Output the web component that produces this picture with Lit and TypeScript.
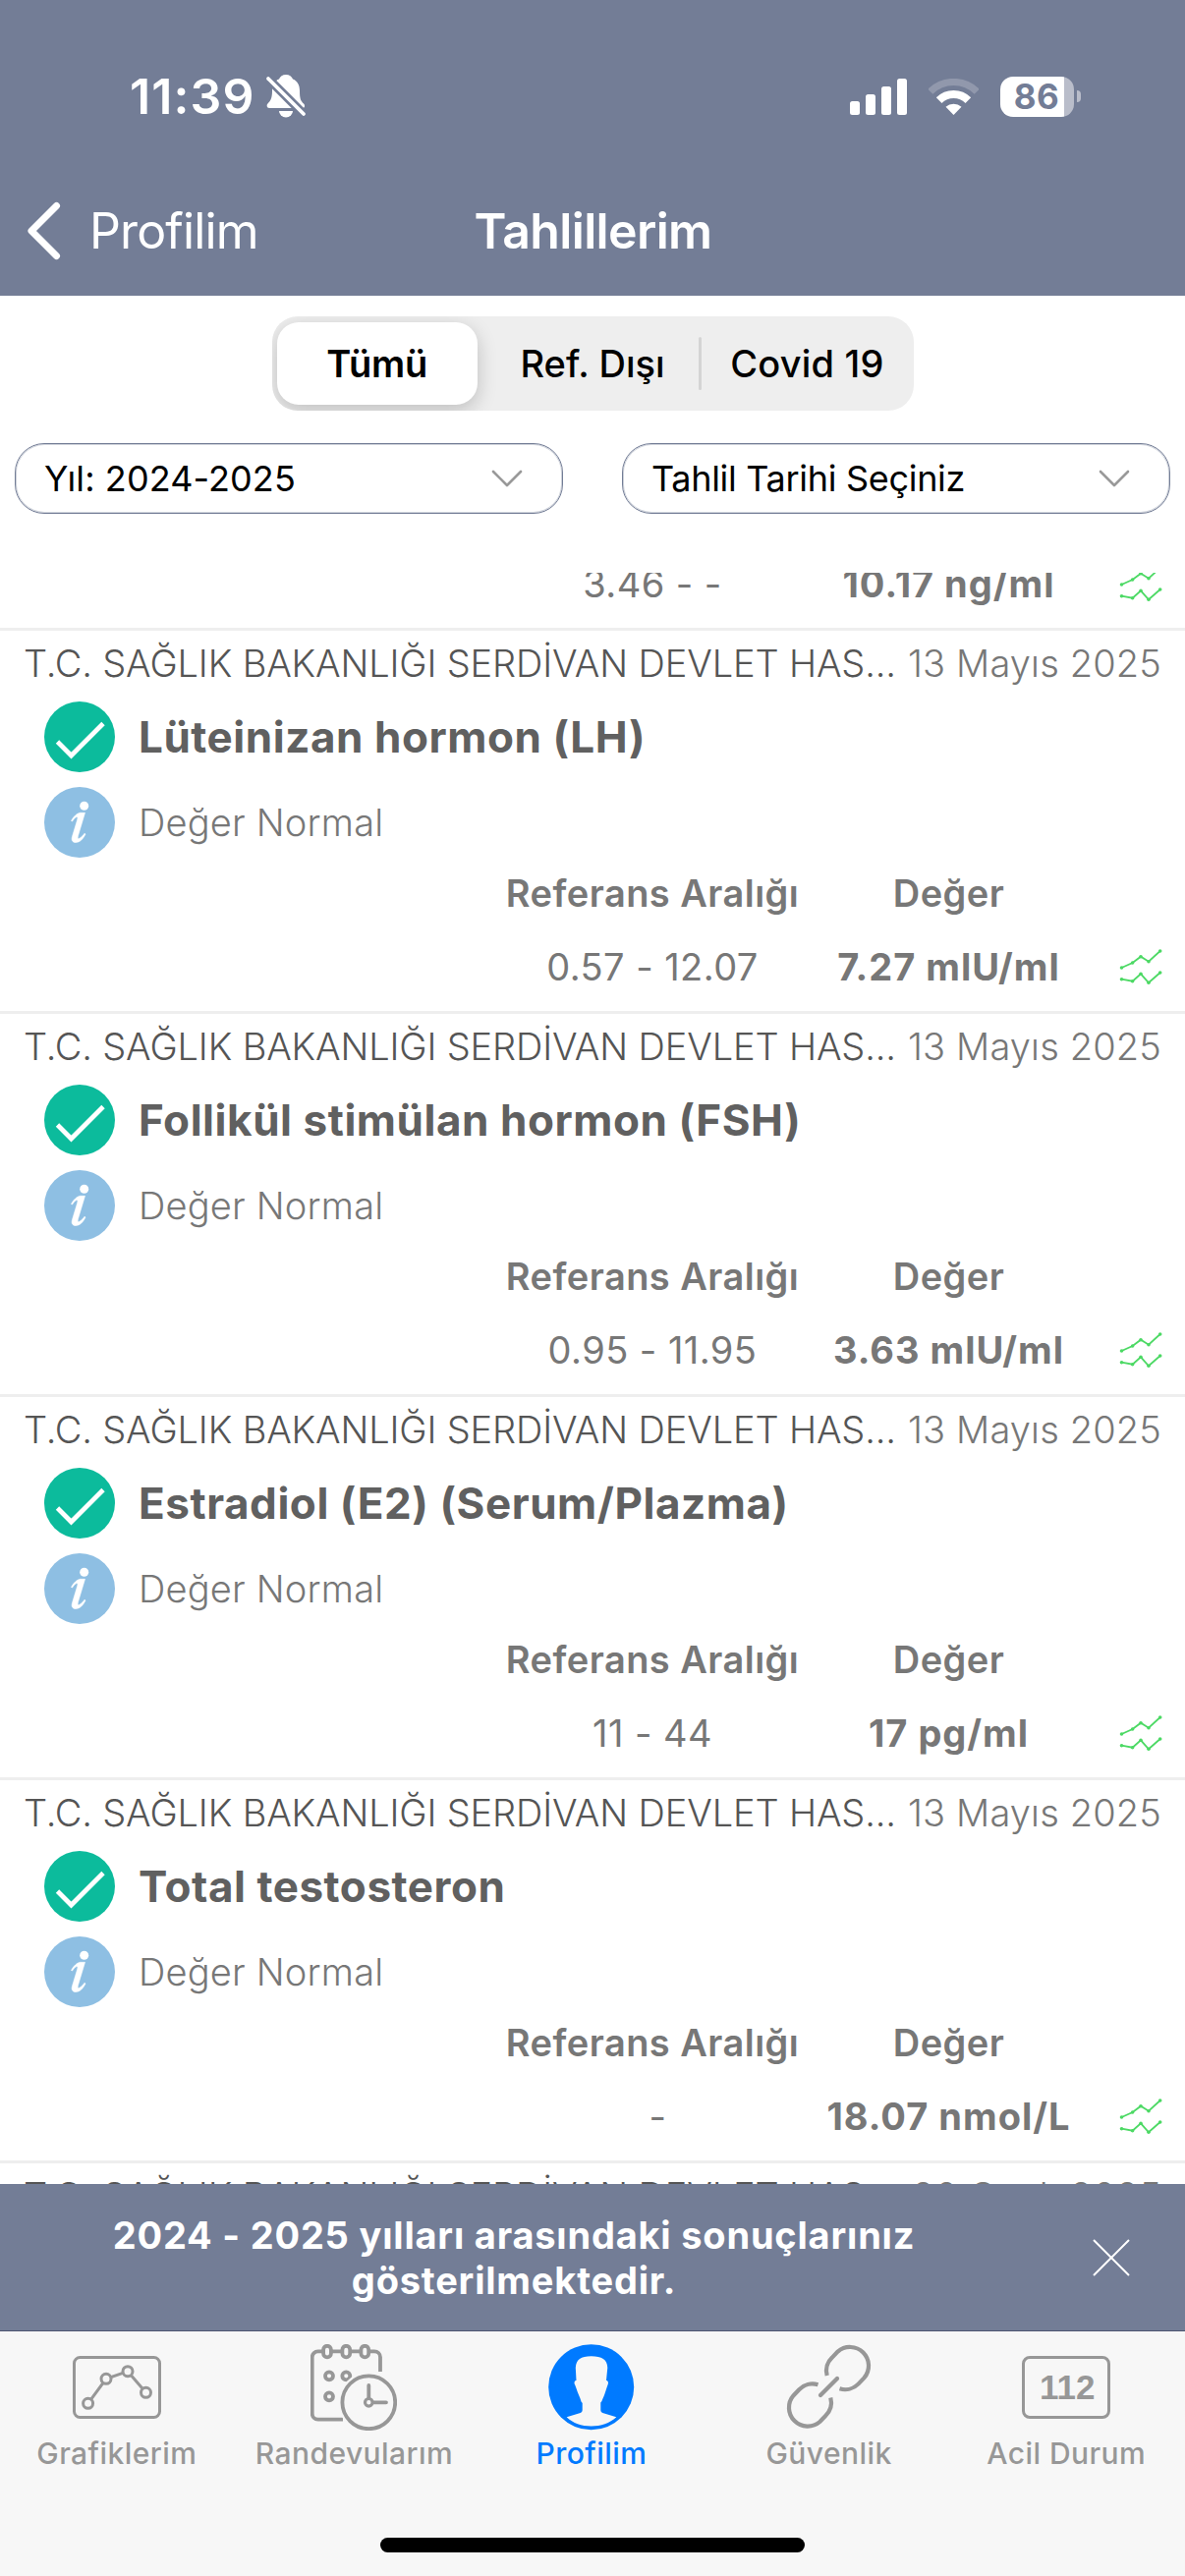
import { LitElement, html, css, svg } from "lit";
import { customElement } from "lit/decorators.js";

interface Result {
  name: string;
  range: string;
  value: string;
}

const HOSPITAL = "T.C. SAĞLIK BAKANLIĞI SERDİVAN DEVLET HAS...";

const RESULTS: Result[] = [
  { name: "Lüteinizan hormon (LH)", range: "0.57 - 12.07", value: "7.27 mlU/ml" },
  { name: "Follikül stimülan hormon (FSH)", range: "0.95 - 11.95", value: "3.63 mlU/ml" },
  { name: "Estradiol (E2) (Serum/Plazma)", range: "11 - 44", value: "17 pg/ml" },
  { name: "Total testosteron", range: "\u00a0-", value: "18.07 nmol/L" },
];

const TREND_POINTS = [
  [2.5, 21], [13.6, 16], [22, 9.7], [30, 14.7], [41.7, 4],
  [2.5, 32.7], [13.6, 34.7], [22, 27.3], [30, 36.3], [41.7, 26],
];

const trend = html`<svg class="trend" viewBox="0 0 44 40" width="44" height="40">
  <g fill="none" stroke="#4cd964" stroke-width="1.8">
    <path d="M2.5 21 13.6 16 22 9.7 30 14.7 41.7 4" />
    <path d="M2.5 32.7 13.6 34.7 22 27.3 30 36.3 41.7 26" />
  </g>
  <g fill="#4cd964">
    ${TREND_POINTS.map(([x, y]) => svg`<circle cx=${x} cy=${y} r="1.8"/>`)}
  </g>
</svg>`;

const down = html`<svg width="32" height="20" viewBox="0 0 32 20">
  <path d="M2 3 16 17 30 3" fill="none" stroke="#999" stroke-width="2.6" stroke-linecap="round" stroke-linejoin="round" />
</svg>`;

const checkIcon = html`<svg width="72" height="72" viewBox="0 0 72 72">
  <circle cx="36" cy="36" r="36" fill="#0cbb9c" />
  <path d="M13.5 41 27.5 55 60 22.5" fill="none" stroke="#fff" stroke-width="4.8" />
</svg>`;

const infoIcon = html`<svg width="72" height="72" viewBox="0 0 72 72">
  <circle cx="36" cy="36" r="36" fill="#8ebfe3" />
  <circle cx="40.7" cy="19.3" r="4.5" fill="#fff" />
  <path d="M27.5 34.5C30 30 33 27 36.5 26.3H41.5L34.5 49.5C33.7 52.5 34.5 53.2 36 52.2C38 51 39.5 49.5 41 47.3L42 48C39.5 53 36 56.5 32 56.5C28.5 56.5 27.5 54 28.5 50.5L33.8 33C34.5 30.5 33.5 30 32 31C30.5 32 29.5 33.5 28.5 35Z" fill="#fff" stroke="#fff" stroke-width=".6" />
</svg>`;

@customElement("app-root")
export class AppRoot extends LitElement {
  static styles = css`
    :host {
      display: flex;
      flex-direction: column;
      width: 1206px;
      height: 2622px;
      overflow: hidden;
      background: #fff;
      font-family: Inter, "Liberation Sans", sans-serif;
      white-space: nowrap;
    }
    * { box-sizing: border-box; }
    svg { display: block; flex: none; }
    .top { height: 301px; background: #737d96; color: #fff; flex: none; }
    .status { height: 196px; display: flex; align-items: center; justify-content: space-between; padding: 0 106px 0 132px; }
    .clock { display: flex; align-items: center; gap: 9px; }
    .time { font-size: 50px; font-weight: 600; letter-spacing: 1.1px; }
    .signals { display: flex; align-items: center; gap: 22px; }
    .battery { display: flex; align-items: center; gap: 3px; }
    .level { width: 75px; height: 41px; border-radius: 13px; background: linear-gradient(90deg, #fff 65px, #b9bdca 65px); color: #737d96; font-size: 35px; font-weight: 700; line-height: 41px; text-align: center; letter-spacing: .4px; padding-right: 1px; }
    .cap { width: 4px; height: 12px; border-radius: 0 4px 4px 0; background: #b9bdca; }
    .nav { height: 78px; display: grid; grid-template-columns: 1fr auto 1fr; align-items: center; }
    .back { display: flex; align-items: center; gap: 29px; padding-left: 26px; font-size: 50px; letter-spacing: -.85px; }
    .title { font-size: 50px; font-weight: 600; letter-spacing: -.65px; padding-left: 1px; }
    .filters { height: 282px; flex: none; padding: 21px 15px 0; }
    .seg { width: 653px; height: 96px; margin: 0 auto; background: #eee; border-radius: 26px; padding: 6px 5px; display: flex; align-items: center; overflow: hidden; font-size: 38px; font-weight: 500; }
    .tab { width: 204px; height: 84px; flex: none; border-radius: 22px; background: #fff; display: flex; align-items: center; justify-content: center; font-weight: 600; letter-spacing: -.3px; box-shadow: 0 6px 20px rgba(0, 0, 0, .2); }
    .opt { width: 225px; text-align: center; padding-left: 10px; }
    .bar { width: 3px; height: 54px; border-radius: 2px; background: #d4d4d4; }
    .last { width: 211px; padding-left: 5px; letter-spacing: .2px; }
    .selects { display: flex; justify-content: space-between; margin-top: 33px; }
    .select { width: 558px; height: 72px; border: 1px solid #737d96; box-shadow: inset 0 0 0 1px rgba(115, 125, 150, .35); border-radius: 30px; padding: 0 40px 0 29px; display: flex; align-items: center; justify-content: space-between; font-size: 36px; letter-spacing: .1px; }
    .date-select { letter-spacing: -.3px; }
    .list { height: 1640px; flex: none; overflow: hidden; display: flex; flex-direction: column; }
    .partial { height: 56px; flex: none; display: flex; flex-direction: column; justify-content: flex-end; padding-bottom: 8px; color: #777; }
    .item { height: 390px; flex: none; border-top: 3px solid #eee; color: #777; }
    .head { height: 67px; padding: 0 24px 2px 24px; display: flex; align-items: center; justify-content: space-between; font-size: 38px; font-weight: 300; }
    .hospital { color: #555; letter-spacing: -.15px; }
    .date { letter-spacing: .15px; }
    .line { display: flex; align-items: center; gap: 24px; padding-left: 45px; height: 72px; margin-top: 5px; }
    .note { margin-top: 15px; font-size: 38px; font-weight: 300; letter-spacing: .2px; }
    .name { font-size: 44px; font-weight: 700; color: #606060; letter-spacing: .55px; }
    .cols { flex: none; display: grid; grid-template-columns: 326px 277px 91px; padding-left: 501px; height: 74px; align-items: center; text-align: center; font-size: 38px; letter-spacing: .45px; }
    .trend { margin-left: 35px; }
    .labels { font-weight: 600; padding-bottom: 2px; }
    .val { font-weight: 700; letter-spacing: 1px; }
    .banner { height: 150px; flex: none; background: #737d96; border-bottom: 1px solid #4e5672; color: #fff; display: flex; align-items: center; padding: 0 56px 0 0; }
    .msg { width: 1046px; margin-right: 66px; text-align: center; font-size: 38px; line-height: 46px; font-weight: 700; letter-spacing: .8px; }
    .tabs { flex: 1; background: #f7f7f7; display: flex; flex-direction: column; align-items: center; }
    .tabrow { display: flex; width: 1208px; margin-left: -2px; height: 210px; flex: none; }
    .tabitem { flex: 1; display: flex; flex-direction: column; align-items: center; color: #979797; font-size: 30px; font-weight: 500; line-height: 21px; letter-spacing: .45px; }
    .icon { height: 114px; display: flex; align-items: center; }
    .sos { width: 90px; height: 64px; border: 3px solid #979797; border-radius: 8px; font: bold 35px/58px "Liberation Sans", sans-serif; letter-spacing: 0; text-align: center; padding-left: 2px; }
    .on { color: #007aff; }
    .home { width: 432px; height: 15px; border-radius: 8px; background: #000; }
  `;

  private cols(range: string, value: string) {
    return html`<div class="cols"><span>${range}</span><span class="val">${value}</span>${trend}</div>`;
  }

  private head(date: string) {
    return html`<div class="head"><span class="hospital">${HOSPITAL}</span><span class="date">${date}</span></div>`;
  }

  render() {
    return html`
      <header class="top">
        <div class="status">
          <div class="clock">
            <span class="time">11:39</span>
            <svg width="44" height="46" viewBox="0 0 44 46">
              <path d="M22 1c3.5 0 6 1.8 7 4.5 5 2 7 6.5 7 12 0 8 1 10 4 13 1.5 1.5 1.5 4.5-1 4.5H5c-2.5 0-3-3-1.5-4.5 3-3 4.5-6 4.5-13 0-5.5 2-10 7-12 1-2.7 3.5-4.5 7-4.5z" fill="#fff" />
              <path d="M15 38h14a7 6.5 0 0 1-14 0z" fill="#fff" />
              <path d="M0 1 41 42" stroke="#737d96" stroke-width="9" />
              <path d="M4 5 40 41" stroke="#fff" stroke-width="3.8" stroke-linecap="round" />
            </svg>
          </div>
          <div class="signals">
            <svg width="58" height="37" viewBox="0 0 58 37" fill="#fff">
              <rect y="23" width="10" height="14" rx="2.5" /><rect x="16" y="16" width="10" height="21" rx="2.5" />
              <rect x="32" y="8" width="10" height="29" rx="2.5" /><rect x="48" width="10" height="37" rx="2.5" />
            </svg>
            <svg width="51" height="37" viewBox="0 0 51 37" fill="none" stroke="#fff">
              <path d="M1.8 13.3A33.5 33.5 0 0 1 49.2 13.3" stroke="#9198ac" stroke-width="7.2" />
              <path d="M10.65 22.15A21 21 0 0 1 40.35 22.15" stroke-width="8" />
              <path d="M25.5 37 17.5 28.8A12 12 0 0 1 33.5 28.8Z" fill="#fff" stroke="none" />
            </svg>
            <div class="battery"><span class="level">86</span><span class="cap"></span></div>
          </div>
        </div>
        <nav class="nav">
          <div class="back">
            <svg width="36" height="60" viewBox="0 0 36 60"><path d="M31.5 4.5 6 30 31.5 55.5" fill="none" stroke="#fff" stroke-width="7" stroke-linecap="round" stroke-linejoin="round" /></svg>
            <span>Profilim</span>
          </div>
          <span class="title">Tahlillerim</span>
        </nav>
      </header>
      <section class="filters">
        <div class="seg">
          <span class="tab">Tümü</span><span class="opt">Ref. Dışı</span><span class="bar"></span><span class="opt last">Covid 19</span>
        </div>
        <div class="selects">
          <div class="select"><span>Yıl: 2024-2025</span>${down}</div>
          <div class="select date-select"><span>Tahlil Tarihi Seçiniz</span>${down}</div>
        </div>
      </section>
      <main class="list">
        <div class="partial">${this.cols("3.46 - -", "10.17 ng/ml")}</div>
        ${RESULTS.map(
          (r) => html`<article class="item">
            ${this.head("13 Mayıs 2025")}
            <div class="line name">${checkIcon}<span>${r.name}</span></div>
            <div class="line note">${infoIcon}<span>Değer Normal</span></div>
            <div class="cols labels"><span>Referans Aralığı</span><span>Değer</span></div>
            ${this.cols(r.range, r.value)}
          </article>`
        )}
        <article class="item">${this.head("20 Ocak 2025")}</article>
      </main>
      <section class="banner">
        <div class="msg">2024 - 2025 yılları arasındaki sonuçlarınız<br />gösterilmektedir.</div>
        <svg width="38" height="38" viewBox="0 0 38 38"><path d="M1 1 37 37M37 1 1 37" stroke="#fff" stroke-width="2" /></svg>
      </section>
      <footer class="tabs">
        <div class="tabrow">
          <div class="tabitem"><div class="icon">
            <svg width="90" height="64" viewBox="0 0 90 64" fill="#f7f7f7" stroke="#979797" stroke-width="3">
              <rect x="1.5" y="1.5" width="87" height="61" rx="6" />
              <path d="M15.6 48.3 34 23.3 56 15.7 74.5 37.3" fill="none" />
              <circle cx="15.6" cy="48.3" r="5" /><circle cx="34" cy="23.3" r="5" /><circle cx="56" cy="15.7" r="5" /><circle cx="74.5" cy="37.3" r="5" />
            </svg></div><span>Grafiklerim</span></div>
          <div class="tabitem"><div class="icon">
            <svg width="88" height="88" viewBox="0 0 88 88" fill="#f7f7f7" stroke="#979797" stroke-width="3.8">
              <path d="M71 28V13.3a6 6 0 0 0-6-6H7.7a6 6 0 0 0-6 6V70.7a6 6 0 0 0 6 6H33" />
              <rect x="13.1" y="1.8" width="7.8" height="11.6" rx="3.9" /><rect x="32.4" y="1.8" width="7.8" height="11.6" rx="3.9" /><rect x="51.4" y="1.8" width="7.8" height="11.6" rx="3.9" />
              <circle cx="19" cy="32.3" r="4" /><circle cx="36.3" cy="32.3" r="4" /><circle cx="19" cy="53.3" r="4" />
              <circle cx="59.3" cy="59.3" r="31" stroke="none" /><circle cx="59.3" cy="59.3" r="26.9" />
              <path d="M59.3 42V56M63 59.3H77" stroke-linecap="round" /><circle cx="59.3" cy="59.3" r="3.8" stroke-width="3.2" />
            </svg></div><span>Randevularım</span></div>
          <div class="tabitem on"><div class="icon">
            <svg width="88" height="88" viewBox="0 0 88 88">
              <circle cx="43.7" cy="43.7" r="43.5" fill="#007aff" />
              <path d="M43.7 12.3C33 12.3 28.5 15.5 27.8 24L28.5 37C26.5 37 26 39.5 27.2 41.5C28.5 44.5 29 47 30.5 50.5C32 54 33 56.5 33.5 58.5L34.7 60V67.3Q34.6 69.5 32.7 70L18.7 74.3C25 80.5 34 83.5 43.7 83.5C53.5 83.5 62.5 80.5 69.3 74.3L55.3 70Q53.4 69.3 53.3 67.3V59.5L54.5 58C55 56 56.5 53.5 57.5 50.5C58.8 47 59.3 44.5 60.5 41.5C61.5 39.5 61 37 59 37L60.3 24C60 15.5 54.5 12.3 43.7 12.3Z" fill="#f7f7f7" />
            </svg></div><span>Profilim</span></div>
          <div class="tabitem"><div class="icon">
            <svg width="88" height="88" viewBox="0 0 88 88" fill="none" stroke="#979797" stroke-width="4.2">
              <path d="M41.7 32A19 19 0 0 1 46.9 13.6L52.6 7.6A19 19 0 0 1 79.4 34.4L73.7 40.4A19 19 0 0 1 54.5 45.3" />
              <path transform="rotate(180 43.5 43.3)" d="M41.7 32A19 19 0 0 1 46.9 13.6L52.6 7.6A19 19 0 0 1 79.4 34.4L73.7 40.4A19 19 0 0 1 54.5 45.3" />
              <path d="M35 52 52 35" stroke-linecap="round" />
            </svg></div><span>Güvenlik</span></div>
          <div class="tabitem"><div class="icon"><div class="sos">112</div></div><span>Acil Durum</span></div>
        </div>
        <div class="home"></div>
      </footer>
    `;
  }
}
